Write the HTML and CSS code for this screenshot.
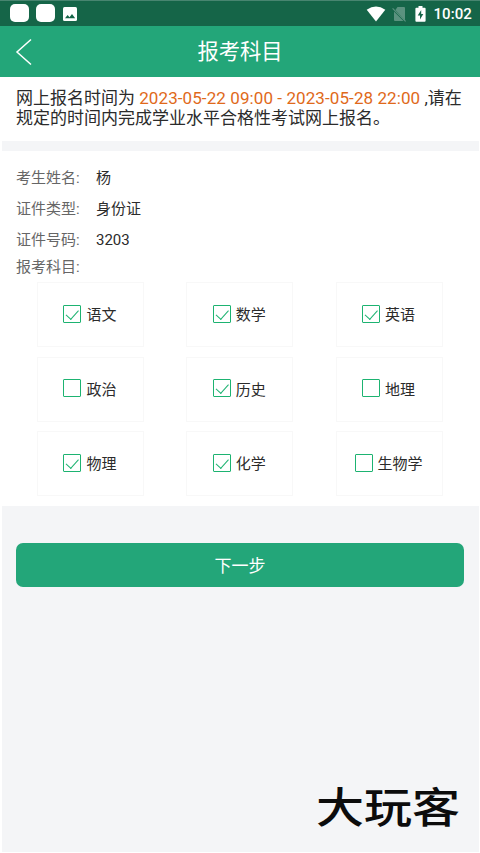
FILE: index.html
```html
<!DOCTYPE html>
<html lang="zh-CN">
<head>
<meta charset="utf-8">
<title>报考科目</title>
<link rel="stylesheet" href="styles.css">
</head>
<body>
<div class="status">
  <span class="app"></span><span class="app"></span>
  <svg class="photo" width="14" height="14" viewBox="0 0 14 14"><rect width="14" height="14" rx="1.5" fill="#fff"/><path d="M2 11.3 4.6 8l1.9 2.2L9 7l3.2 4.3z" fill="#156548"/></svg>
  <svg class="wifi" width="20" height="16" viewBox="0 0 20 16"><path d="M.7 3.8Q10-2.8 19.3 3.8L10 15.5z" fill="#fff"/></svg>
  <svg class="sim" width="15" height="16" viewBox="0 0 15 16"><path d="M5.5 1H12q1 0 1 1v12.5L3.4 4z M2 5.5l9.5 9.5H3q-1 0-1-1z" fill="#5b927f"/><path d="m.6 2.3 13 13" stroke="#5b927f" stroke-width="1.2"/></svg>
  <svg class="battery" width="11" height="16" viewBox="0 0 11 16"><path d="M3.5 0h4v1.8h2.2q.9 0 .9.9v12.1q0 .9-.9.9H1.3q-.9 0-.9-.9V2.7q0-.9.9-.9h2.2z" fill="#fff"/><path d="M6.2 4 2.7 9.5H5v4L8.3 8H6.2z" fill="#156548"/></svg>
  <span class="clock">10:02</span>
</div>
<header class="header">
  <svg class="back" width="18" height="28" viewBox="0 0 18 28"><path d="M16 1.5 2 14l14 12.5" fill="none" stroke="#fff" stroke-width="1.5"/></svg>
  <h1>报考科目</h1>
</header>
<main class="content">
  <section class="notice">网上报名时间为 <span class="dates">2023-05-22 09:00 - 2023-05-28 22:00</span> ,请在<br>规定的时间内完成学业水平合格性考试网上报名。</section>
  <section class="form">
    <div class="row"><span class="label">考生姓名:</span><span>杨</span></div>
    <div class="row"><span class="label">证件类型:</span><span>身份证</span></div>
    <div class="row"><span class="label">证件号码:</span><span>3203</span></div>
    <div class="row last"><span class="label">报考科目:</span></div>
    <div class="subjects">
      <div class="card"><span class="box on"></span>语文</div>
      <div class="card"><span class="box on"></span>数学</div>
      <div class="card"><span class="box on"></span>英语</div>
      <div class="card"><span class="box"></span>政治</div>
      <div class="card"><span class="box on"></span>历史</div>
      <div class="card"><span class="box"></span>地理</div>
      <div class="card"><span class="box on"></span>物理</div>
      <div class="card"><span class="box on"></span>化学</div>
      <div class="card"><span class="box"></span>生物学</div>
    </div>
  </section>
  <button class="next">下一步</button>
</main>
<div class="mark">大玩客</div>
</body>
</html>
```
FILE: styles.css
```css
* { box-sizing: border-box; }
body {
  margin: 0;
  height: 853px;
  overflow: hidden;
  display: flex;
  flex-direction: column;
  background: #fff;
  color: #2b2b2b;
  font-family: Roboto, "Noto Sans CJK SC", sans-serif;
}
.status {
  height: 26px;
  flex: none;
  display: flex;
  align-items: center;
  padding: 0 8px 0 10px;
  background: #156548;
  border-top: 1px solid #488570;
}
.app { width: 19px; height: 18px; margin: 0 7px 1px 0; border-radius: 5px; background: #fff; }
.photo { margin-left: 1px; }
.wifi { margin-left: auto; }
.sim { margin-left: 6px; }
.battery { margin-left: 8px; }
.clock { margin-left: 7px; color: #fff; font-size: 15px; font-weight: 500; line-height: 24px; letter-spacing: .1px; }
.header {
  height: 51px;
  flex: none;
  display: grid;
  grid-template-columns: 40px 1fr 40px;
  align-items: center;
  background: #23a679;
}
.back { margin-left: 15px; }
.header h1 { margin: 0; padding-top: 1px; color: #fff; font-size: 21.3px; line-height: 30px; font-weight: 400; text-align: center; }
.content {
  flex: 1;
  margin: 0 1px 1px 2px;
  background: #f4f5f7;
}
.notice {
  height: 64px;
  padding: 11px 0 0 14px;
  background: #fff;
  font-size: 17px;
  line-height: 20px;
  white-space: nowrap;
}
.dates { color: #e0691a; letter-spacing: .09px; }
.form { height: 355px; margin-top: 10px; padding-top: 12px; background: #fff; }
.row { display: flex; height: 31px; padding-left: 14px; font-size: 15px; line-height: 31px; }
.row.last { height: 26px; line-height: 22px; }
.label { width: 80px; color: #666; }
.subjects {
  display: grid;
  grid-template-columns: repeat(3, 107px);
  grid-auto-rows: 65px;
  column-gap: 42.3px;
  row-gap: 9.5px;
  margin: 0 0 0 35px;
}
.card {
  display: flex;
  align-items: center;
  justify-content: center;
  padding: 0 1px 2px 0;
  border: 1px solid #f8f8f8;
  font-size: 15px;
}
.box { position: relative; width: 18px; height: 18px; margin-right: 5px; border: 1px solid #1db371; border-radius: 1px; }
.box.on::after {
  content: "";
  position: absolute;
  left: 5px;
  top: 1px;
  width: 5.5px;
  height: 10.5px;
  border: solid #1db371;
  border-width: 0 1.4px 1.4px 0;
  transform: rotate(42deg);
}
.next {
  display: block;
  width: 448px;
  height: 44px;
  margin: 37px 0 0 14px;
  padding: 0 0 2px;
  border: 0;
  border-radius: 7px;
  background: #23a679;
  color: #fff;
  font: inherit;
  font-size: 17px;
}
.mark {
  position: absolute;
  left: 316px;
  top: 780px;
  color: #0c0c0c;
  font-size: 48px;
  line-height: 54px;
  font-weight: 500;
  white-space: nowrap;
  transform: translateY(2.5px) scaleY(.87);
}
```
